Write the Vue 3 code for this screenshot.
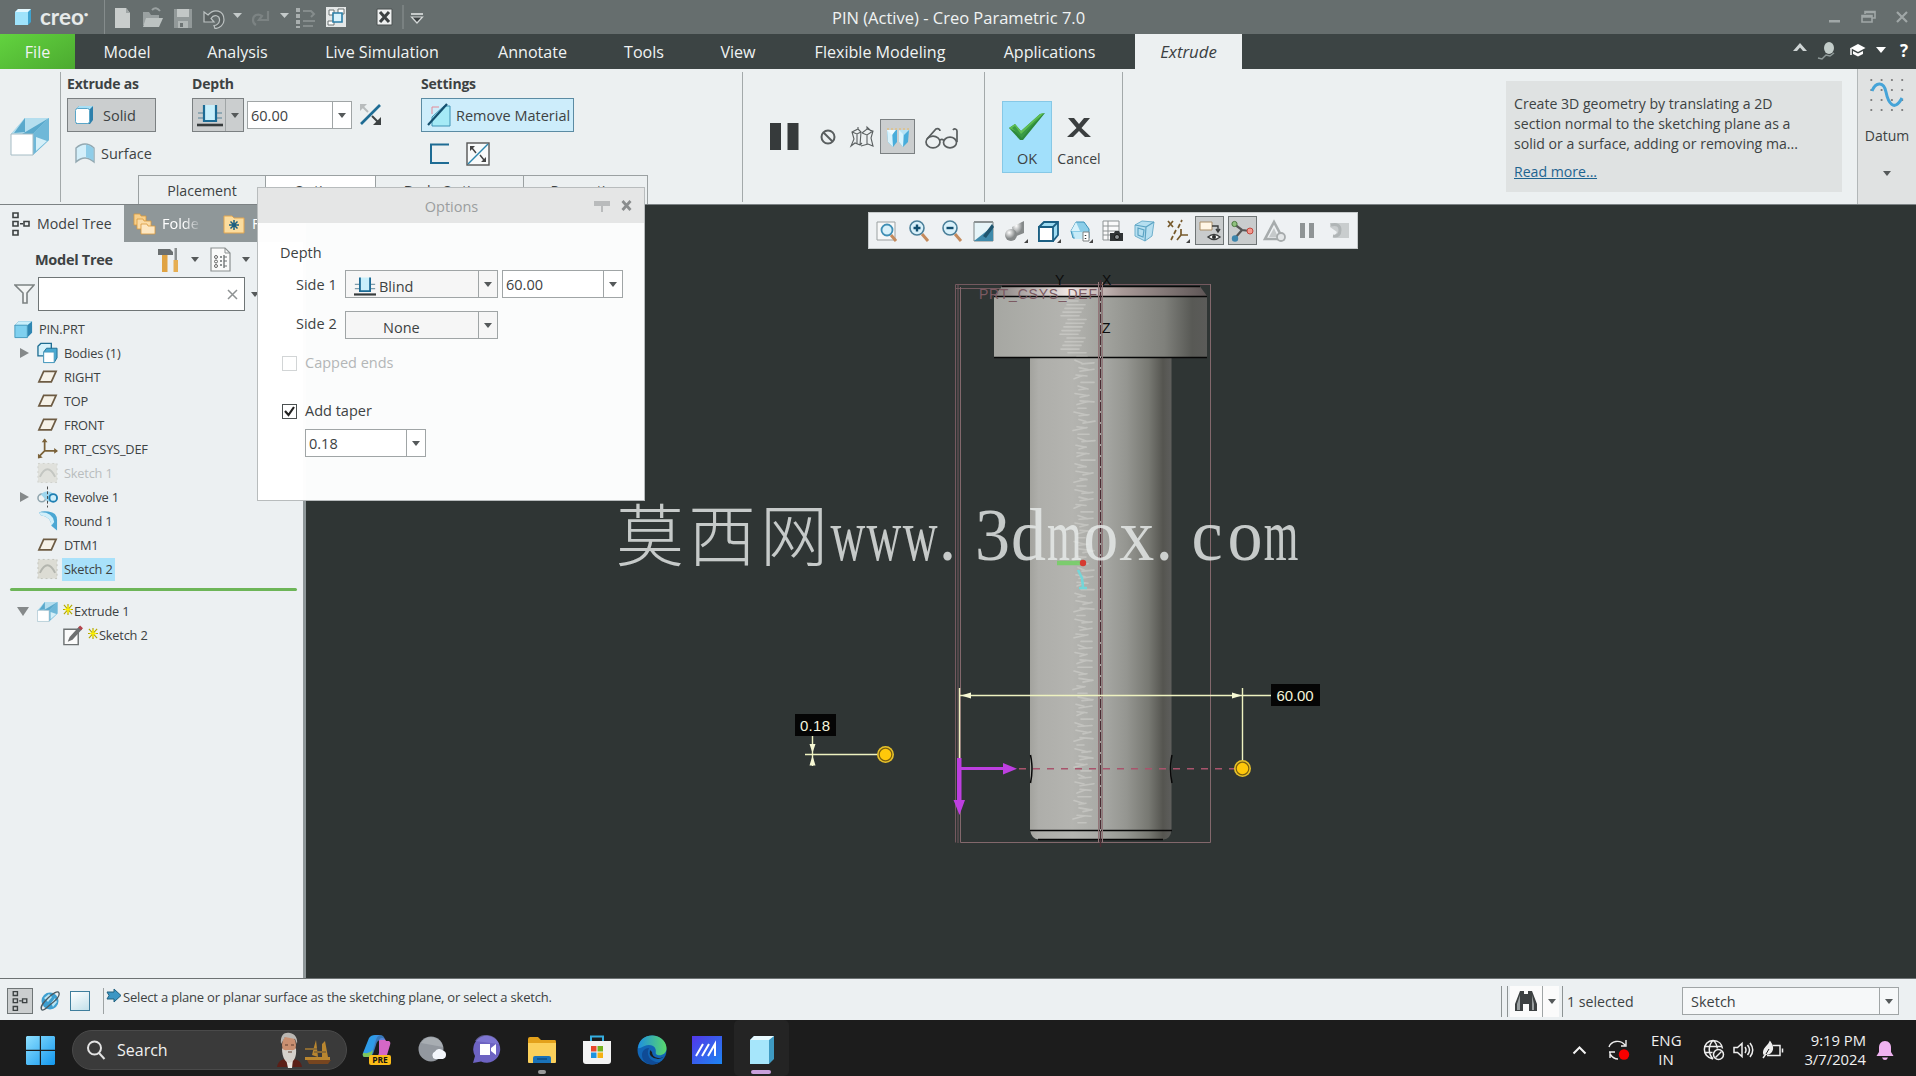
<template>
  <div class="creo">
    <header class="titlebar">
      <div class="brand">
        <svg width="18" height="18" viewBox="0 0 18 18">
          <path d="M1 4l3-3h13v13l-3 3H1z" fill="#3fa3cf"/>
          <path d="M1 4l3-3h13l-3 3z" fill="#e4f8ff"/>
          <path d="M1 4h13v13H1z" fill="#9fe3fb"/>
        </svg>
        <span class="brand-name">creo<sup>•</sup></span>
      </div>
      <div class="quick-access">
        <svg
          v-for="item in quickAccess"
          :key="item.icon"
          class="quick-icon"
          :style="{ width: item.width + 'px' }"
          :viewBox="`0 0 ${item.width} 24`"
          height="24"
          v-html="icons[item.icon]"
        />
      </div>
      <div class="window-title">PIN (Active) - Creo Parametric 7.0</div>
      <div class="window-controls">
        <svg width="12" height="14" viewBox="0 0 12 14"><path d="M0 10h11v2.500H0z" fill="#a0a7a7"/></svg>
        <svg width="15" height="14" viewBox="0 0 15 14" fill="none" stroke="#a0a7a7" stroke-width="1.600">
          <path d="M4 4V1.500h10V8h-3M4 2.500h10M1 5.500h10V12H1zM1 7h10"/>
        </svg>
        <svg width="12" height="14" viewBox="0 0 12 14"><path d="M1 2l10 10M11 2L1 12" stroke="#a0a7a7" stroke-width="2.200"/></svg>
      </div>
    </header>

    <nav class="tabbar">
      <div class="tab file-tab">File</div>
      <div v-for="tab in tabs" :key="tab.label" class="tab" :style="{ width: tab.width + 'px' }">{{ tab.label }}</div>
      <div class="tab active-tab">Extrude</div>
      <div class="tab-tools">
        <svg width="14" height="10" viewBox="0 0 14 10"><path d="M0 9l7-8 7 8h-4L7 5.500 4 9z" fill="#cfd5d5"/></svg>
        <svg width="18" height="19" viewBox="0 0 18 19">
          <ellipse cx="12" cy="7" rx="5" ry="6" fill="#c3cdca"/>
          <path d="M1 17l4 1 4-4 4 1 4-3" fill="none" stroke="#8e9998" stroke-width="1.500"/>
        </svg>
        <svg width="16" height="14" viewBox="0 0 16 14" fill="#fff">
          <path d="M8 1l7.500 4L8 9 .5 5z"/><path d="M3 8l5 2.500L13 8v3l-5 2.500L3 11z"/><path d="M1 5v7" stroke="#fff" stroke-width="1.500"/>
        </svg>
        <svg width="10" height="7" viewBox="0 0 10 7"><path d="M0 0h10L5 6z" fill="#fff"/></svg>
        <b>?</b>
      </div>
    </nav>

    <section class="ribbon">
      <div class="feature-cell">
        <svg width="40" height="40" viewBox="0 0 40 40" v-html="icons.extrude" />
      </div>

      <div class="ribbon-main">
        <div class="groups">
          <div class="group extrude-as">
            <h4>Extrude as</h4>
            <button class="rbtn pressed solid-btn">
              <svg width="22" height="22" viewBox="0 0 22 22">
                <path d="M2 5l3-3h14v14l-3 4H2z" fill="#2d7fab"/><path d="M2 5l3-3h14l-3 3z" fill="#a8dff5"/>
                <rect x="1.500" y="4.500" width="14" height="15" rx="2" fill="#fff" stroke="#5aa6c8"/>
              </svg>
              Solid
            </button>
            <button class="rbtn surface-btn">
              <svg width="22" height="22" viewBox="0 0 22 22">
                <path d="M2 6Q11-2 20 6v14Q11 12 2 20z" fill="#d3effa" stroke="#93a8b1" stroke-width="1.400"/>
                <path d="M12 2.500q4 .5 7.500 4V19q-4-3.500-7.500-3.500z" fill="#8fcde8"/>
              </svg>
              Surface
            </button>
          </div>
          <div class="group depth">
            <h4>Depth</h4>
            <div class="depth-row">
              <div class="depth-mode">
                <svg width="26" height="26" viewBox="0 0 26 26" v-html="icons.blind" />
                <span class="arrow-cell"><i class="caret" /></span>
              </div>
              <div class="combo ribbon-combo"><span>60.00</span><span class="arrow-cell"><i class="caret" /></span></div>
              <svg class="flip" width="24" height="24" viewBox="0 0 24 24">
                <path d="M2 21L21 2" stroke="#1e6c94" stroke-width="2.600"/>
                <path d="M1 1h7L1 8z" fill="#b8bcbd"/><path d="M4 4l5 5" stroke="#b8bcbd" stroke-width="2"/>
                <path d="M22 22h-8l8-8z" fill="#3d4243"/><path d="M13 13l6 6" stroke="#3d4243" stroke-width="2"/>
              </svg>
            </div>
          </div>
          <div class="group settings">
            <h4>Settings</h4>
            <button class="rbtn remove-btn">
              <svg width="25" height="26" viewBox="0 0 25 26">
                <path d="M5 12V5h7" fill="none" stroke="#e58a97"/>
                <path d="M5 20V15L17 4h6v20H5z" fill="#a5eaf6" stroke="#3f93b5"/>
                <path d="M1 23L20 2" stroke="#15506f" stroke-width="2.200"/>
              </svg>
              Remove Material
            </button>
            <div class="setting-icons">
              <svg width="20" height="22" viewBox="0 0 20 22"><path d="M20 1.500H2v18.500h18" fill="none" stroke="#1e6c94" stroke-width="2"/></svg>
              <svg width="24" height="24" viewBox="0 0 24 24">
                <rect x="1" y="1" width="22" height="22" fill="#f8fafa" stroke="#555" stroke-width="1.400"/>
                <path d="M2 22L22 2" stroke="#2c86ae" stroke-width="1.500"/>
                <path d="M4 4h5l-5 5zM20 20h-5l5-5z" fill="#444"/><path d="M6 6l4 5M14 13l4 5" stroke="#444" stroke-width="1.500"/>
              </svg>
            </div>
          </div>
        </div>
        <div class="panel-tabs">
          <span class="ptab placement">Placement</span>
          <span class="ptab options-tab">Options</span>
          <span class="ptab body-tab">Body Options</span>
          <span class="ptab props-tab">Properties</span>
        </div>
      </div>

      <div class="preview-cell">
        <svg class="pause" width="29" height="28" viewBox="0 0 29 28" fill="#363a3b"><path d="M0 0h11v27H0zM17.500 0h11v27h-11z"/></svg>
        <svg width="16" height="16" viewBox="0 0 16 16" fill="none" stroke="#595e5f" stroke-width="2">
          <circle cx="8" cy="8" r="6.500"/><path d="M3.500 3.500l9 9"/>
        </svg>
        <svg class="wire" width="26" height="24" viewBox="0 0 26 24" fill="none" stroke="#5b6061" stroke-width="1.100">
          <path d="M3 7l6-3 3 3-1 13-5-2-4 3 3-7zM13 8l5-4 6 2-2 7 2 8-5-2-7 2M3 7l5 2 4-2M8 9v10M13 8l5 2 6-4M18 10v9M9 4V2M18 4V2l4 4M11 20l2-2"/>
        </svg>
        <div class="feature-toggle">
          <svg width="24" height="24" viewBox="0 0 24 24">
            <path d="M1 5h10v12l-4 5-5-5z" fill="#49addb"/><path d="M1 5h5l1 17-5-5z" fill="#d8f3fd"/><path d="M1 5h9l-4 5z" fill="#eefaff"/>
            <path d="M13 5h10l-1 12-5 5-4-5z" fill="#49addb"/><path d="M13 5h5l-1 17-4-5z" fill="#d8f3fd"/><path d="M13 5h10l-5 5z" fill="#b6e2f4"/>
            <path d="M1 4h10M13 4h10" stroke="#e9b963" stroke-width="1.200" stroke-dasharray="2 2"/>
          </svg>
        </div>
        <svg width="36" height="24" viewBox="0 0 36 24" fill="none" stroke="#595e5f" stroke-width="1.700">
          <ellipse cx="9" cy="17" rx="7" ry="5.800"/><ellipse cx="26" cy="17.500" rx="6.500" ry="5.300"/>
          <path d="M15.500 15.500c1-1.500 3-1.500 4.500 0M3 14L12 4c1.500-1 4 0 4 2M33 17V6c0-2-3-3-4-1"/>
        </svg>
      </div>

      <div class="confirm-cell">
        <div class="ok">
          <svg width="38" height="30" viewBox="0 0 38 30">
            <path d="M1 16l6-4 6 7L32 2l5-1-22 27h-3z" fill="#2d8a3a"/><path d="M1 16l6-4 6 7L32 2l4-1-22 22z" fill="#5fbf52"/>
            <path d="M4 16l3-2 6 8L31 5 14 26z" fill="#3a9a45"/>
          </svg>
          <span>OK</span>
        </div>
        <div class="cancel">
          <svg width="26" height="22" viewBox="0 0 26 22"><path d="M2 1h6l5 6 5-6h6l-8.500 10L25 20h-6l-6-6-6 6H1l9.500-9z" fill="#3b3f40"/></svg>
          <span>Cancel</span>
        </div>
      </div>

      <div class="help-cell">
        <div class="help-box">
          <p>Create 3D geometry by translating a 2D<br>section normal to the sketching plane as a<br>solid or a surface, adding or removing ma...</p>
          <a>Read more...</a>
        </div>
      </div>

      <div class="datum-cell">
        <svg width="36" height="36" viewBox="0 0 36 36">
          <g fill="#777">
            <template v-for="r in 4" :key="r">
              <circle v-for="c in 4" :key="c" :cx="c * 10.300 - 8" :cy="r * 10 - 7" r="1.100" />
            </template>
          </g>
          <path d="M3 14C7 4 15 5 17 15s8 21 16 6" fill="none" stroke="#46a4d8" stroke-width="3"/>
        </svg>
        <span>Datum</span>
        <i class="caret" />
      </div>
    </section>

    <main class="workspace">
      <aside class="sidebar">
        <div class="side-tabs">
          <div class="side-tab current">
            <svg width="20" height="26" viewBox="0 0 20 26" fill="none" stroke="#3c4142" stroke-width="1.600" v-html="icons.tree" />
            <span>Model Tree</span>
          </div>
          <div class="side-tab folder-tab">
            <svg width="24" height="24" viewBox="0 0 24 24" stroke="#d8993e" stroke-width=".8">
              <path d="M1 2h6l1 2h5v9H1z" fill="#f7cf8b"/><path d="M4 7h6l1 2h7v8H4z" fill="#fadba6"/><path d="M8 12h6l1 2h7v8H8z" fill="#fde7c2"/>
            </svg>
            <span class="fade-text">Folde</span>
          </div>
          <div class="side-tab fav-tab">
            <svg width="22" height="20" viewBox="0 0 22 20">
              <path d="M1 2h8l2 2h10v15H1z" fill="#fbdc9e" stroke="#e0a550"/>
              <path d="M11 6v10M6 11h10M7.500 7.500l7 7M14.500 7.500l-7 7" stroke="#1d5f80" stroke-width="1.500"/>
            </svg>
            <span>F</span>
          </div>
        </div>

        <div class="tree-head">
          <strong>Model Tree</strong>
          <svg width="24" height="26" viewBox="0 0 24 26">
            <path d="M1 2h12l3 3v3H1z" fill="#6a6f70"/><path d="M5 8h5.500v17H5z" fill="#e0a342"/>
            <path d="M17.500 1h2.500v12h-2.500z" fill="#8a8f90"/><path d="M16.500 13h4.500v12h-4.500z" fill="#e6ae52"/>
          </svg>
          <i class="caret" />
          <svg class="list-icon" width="21" height="25" viewBox="0 0 21 25">
            <path d="M1 1h14l5 5v18H1z" fill="#fafafa" stroke="#8a8f90" stroke-width="1.200"/><path d="M15 1v5h5" fill="none" stroke="#8a8f90"/>
            <path d="M10 10h2M10 14h2M10 18h2M14 8v13" stroke="#6a6f70" stroke-width="1.300"/>
            <g fill="none" stroke="#666"><circle cx="6" cy="10" r="1.500"/><circle cx="6" cy="14.500" r="1.500"/><circle cx="6" cy="19" r="1.500"/></g>
            <path d="M14 10h3M14 14h3M14 19h3" stroke="#6a6f70"/>
          </svg>
          <i class="caret" />
        </div>

        <div class="filter-row">
          <svg width="21" height="20" viewBox="0 0 21 20"><path d="M1 1h19l-7 8v10H9V9z" fill="#f3f5f5" stroke="#7c8283" stroke-width="1.600"/></svg>
          <div class="filter-input">
            <svg width="11" height="11" viewBox="0 0 11 11"><path d="M1 1l9 9M10 1l-9 9" stroke="#8e9293" stroke-width="1.500"/></svg>
          </div>
          <i class="caret" />
        </div>

        <div class="tree">
          <div v-for="(node, i) in nodes" :key="i" class="node" :class="['level-' + node.level, { dim: node.dim }]">
            <span class="twisty"><i v-if="node.arrow" :class="'tri-' + node.arrow" /></span>
            <svg class="node-icon" width="22" height="22" viewBox="0 0 22 22" v-html="icons[node.icon]" />
            <span class="node-label" :class="{ selected: node.selected }">{{ node.label }}</span>
          </div>
          <div class="insert-line" />
          <div v-for="(node, i) in pendingNodes" :key="'p' + i" class="node" :class="'level-' + node.level">
            <span class="twisty"><i v-if="node.arrow" :class="'tri-' + node.arrow" /></span>
            <svg class="node-icon" width="22" height="22" :viewBox="node.icon === 'extrude' ? '0 0 40 40' : '0 0 22 22'" v-html="icons[node.icon]" />
            <svg class="spark" width="10" height="11" viewBox="0 0 11 12">
              <path d="M5.500 0v12M0 6h11M1 1l9 10M10 1L1 11" stroke="#b4a800" stroke-width="1.300"/><path d="M5.500 2v8M2 6h7" stroke="#fff200" stroke-width="1.500"/>
            </svg>
            <span class="node-label">{{ node.label }}</span>
          </div>
        </div>
      </aside>

      <div class="viewport">
        <!-- model, datums and dimensions share window coordinates -->
        <svg class="scene" viewBox="306 205 1610 773" width="1610" height="773">
          <defs>
            <linearGradient id="shaft" x1="0" x2="1">
              <stop offset="0" stop-color="#a3a39e"/><stop offset=".06" stop-color="#aeaeaa"/><stop offset=".3" stop-color="#b4b4b0"/>
              <stop offset=".5" stop-color="#a9aaa6"/><stop offset=".68" stop-color="#959691"/><stop offset=".84" stop-color="#777872"/>
              <stop offset=".94" stop-color="#555550"/><stop offset="1" stop-color="#5e5e5c"/>
            </linearGradient>
            <linearGradient id="head" x1="0" x2="1">
              <stop offset="0" stop-color="#a6a7a2"/><stop offset=".35" stop-color="#b4b4b0"/><stop offset=".55" stop-color="#9e9f9a"/>
              <stop offset=".8" stop-color="#7f807b"/><stop offset=".93" stop-color="#585955"/><stop offset="1" stop-color="#5b5b59"/>
            </linearGradient>
            <linearGradient id="crown" x1="0" x2="1">
              <stop offset="0" stop-color="#86807e"/><stop offset=".35" stop-color="#efe6e4"/><stop offset=".6" stop-color="#a99a98"/><stop offset="1" stop-color="#5e5656"/>
            </linearGradient>
          </defs>

          <rect x="1030" y="357" width="141.500" height="473" fill="url(#shaft)"/>
          <path d="M1030 830h141.500q-1 9-8 9.500h-125q-7-.5-8.500-9.500z" fill="url(#shaft)"/>
          <rect x="994" y="296" width="213" height="61.500" fill="url(#head)"/>
          <path d="M994 296l8-9.500h198l7 9.500z" fill="url(#crown)"/>
          <g fill="none" stroke="#dededa" stroke-width="1.600" stroke-linecap="round" opacity=".42">
            <path v-for="(s, i) in streaks" :key="i" :d="s" />
          </g>
          <g stroke="#080808" stroke-width="1.300" fill="none">
            <path d="M1002 286.500h198M994 296.500h213M994 357.500h213M1030 830.500h142M1038 839.500h125"/>
            <path d="M1030.500 755q3 14 0 28M1172 755q-3 14 0 28" stroke-width="1.500"/>
          </g>

          <g stroke="#74595f" fill="none">
            <path d="M955.500 284.500V842.500M958 284V843M955.500 284.500H1211M955 288.500H1000"/>
            <path d="M960.500 287V842.500H1210.500V284" stroke="#83686c"/>
            <path d="M1098.500 282V842M1102.500 282V842" stroke="#93777a"/>
            <path d="M1100.500 280V847" stroke="#4a2c33" stroke-width="1.600"/>
            <path d="M1100.500 290V840" stroke="#a9a3a0" stroke-dasharray="2 9"/>
          </g>
          <g class="cad-text" fill="#0c0c0c">
            <text x="1055" y="285">Y</text><text x="1102" y="285">X</text><text x="1102" y="333">Z</text>
            <text x="979" y="299" class="csys" textLength="118">PRT_CSYS_DEF</text>
          </g>

          <!-- watermark -->
          <g class="mark">
            <text v-for="(ch, i) in '莫西网'" :key="ch" :x="616 + i * 72" y="561" class="cjk">{{ ch }}</text>
            <text v-for="(m, i) in mark" :key="'m' + i" :transform="`translate(${m.x} 560) scale(${m.sx} 1)`">{{ m.ch }}</text>
          </g>

          <!-- spin center -->
          <path d="M1057 563h24" stroke="#6fd35f" stroke-width="4.500" opacity=".8"/>
          <circle cx="1083" cy="563" r="3.200" fill="#d63a31"/>
          <path d="M1078 570l4 8 1 9M1079 588h8" stroke="#74d6d8" stroke-width="2.600" fill="none"/>

          <g stroke="#eef2c0" stroke-width="1.400" fill="none">
            <path d="M960 695.500H1271M959.500 688V760" />
            <path d="M1242.500 688V762M812.500 736V766M805 754.500H878"/>
          </g>
          <g fill="#f6f8d4">
            <path d="M961 695.500l10-3v6zM1242 695.500l-10-3v6zM812.500 753l-3-9h6zM812.500 755.500l-3 10h6z"/>
          </g>
          <path d="M1019 768.800H1235" stroke="#a8546c" stroke-width="1.500" stroke-dasharray="7 7"/>
          <g fill="#bd3fe0">
            <path d="M957 758h4.500v42h3.500l-5.500 15-6-15h3.500zM960 767h43v-4l14 5.800-14 5.700v-4.500h-43z"/>
          </g>
          <g v-for="h in handles" :key="h.x">
            <circle :cx="h.x" :cy="h.y" r="8.500" fill="#e8c22a"/>
            <circle :cx="h.x" :cy="h.y" r="6.300" fill="#ffc80a" stroke="#7a5f10" stroke-width="1.200"/>
          </g>
          <path d="M1271 684h49v22h-49zM795 714h41v22h-41z" fill="#050505"/>
          <g class="dim-text">
            <text x="1276.500" y="700.500" textLength="37">60.00</text>
            <text x="800" y="730.500" textLength="30">0.18</text>
          </g>
        </svg>

        <div class="view-toolbar">
          <div v-for="(name, i) in viewTools" :key="name" class="view-tool" :class="{ on: i === 10 || i === 11 }">
            <svg width="24" height="24" viewBox="0 0 24 24" v-html="icons[name]" />
          </div>
        </div>
      </div>
    </main>

    <div class="options-dialog">
      <div class="dialog-head">
        <span>Options</span>
        <svg class="pin" width="16" height="12" viewBox="0 0 16 12"><path d="M0 1h16v5H0z" fill="#b9bbbc"/><path d="M8 6v6" stroke="#b9bbbc" stroke-width="2"/></svg>
        <svg width="11" height="11" viewBox="0 0 11 11"><path d="M1.500 1l8 9M9.500 1l-8 9" stroke="#8a8d8e" stroke-width="2.800"/></svg>
      </div>
      <div class="dialog-body">
        <div class="line depth-line">Depth</div>
        <div class="line side-1">
          <label>Side 1</label>
          <div class="combo wide"><span class="opt"><svg width="22" height="22" viewBox="0 0 26 26" v-html="icons.blind" />Blind</span><span class="arrow-cell"><i class="caret" /></span></div>
          <div class="combo value"><span>60.00</span><span class="arrow-cell"><i class="caret" /></span></div>
        </div>
        <div class="line side-2">
          <label>Side 2</label>
          <div class="combo wide"><span class="opt none">None</span><span class="arrow-cell"><i class="caret" /></span></div>
        </div>
        <div class="line check-line disabled"><span class="box" />Capped ends</div>
        <div class="line check-line taper">
          <span class="box"><svg width="13" height="13" viewBox="0 0 13 13"><path d="M2 6l3.500 4L11 2" fill="none" stroke="#222" stroke-width="2.200"/></svg></span>Add taper
        </div>
        <div class="combo value taper-value"><span>0.18</span><span class="arrow-cell"><i class="caret" /></span></div>
      </div>
    </div>

    <footer class="statusbar">
      <div class="status-toggle">
        <svg width="20" height="22" viewBox="0 0 20 26" fill="none" stroke="#3c4142" stroke-width="1.600" v-html="icons.tree" />
      </div>
      <svg class="globe" width="22" height="22" viewBox="0 0 22 22">
        <circle cx="11" cy="11" r="8.500" fill="#3e9fd0"/><path d="M5 8l5-4 3 3-4 5zM12 13l4-5 2 4-4 5z" fill="#b8e4f4"/>
        <path d="M3 20C0 17 5 12 9 8S19 0 20 3s-4 8-8 11-7 7-9 6z" fill="none" stroke="#4b5a61" stroke-width="1.300"/>
      </svg>
      <div class="window-swatch" />
      <div class="message">
        <svg width="16" height="15" viewBox="0 0 16 15"><path d="M1 4h7V1l7 6.500L8 14v-3H1l2-3.500z" fill="#3c96c4" stroke="#1f607f"/></svg>
        <span>Select a plane or planar surface as the sketching plane, or select a sketch.</span>
      </div>
      <div class="find-box">
        <svg width="24" height="22" viewBox="0 0 24 22">
          <path d="M6 1h4v3h4V1h4l5 13v7h-8v-7H9v7H1v-7z" fill="#3d4142"/><path d="M6 5L3 14v6h3V8zM18 5l2 9v6h-2z" fill="#9a9fa0"/>
        </svg>
        <span class="arrow-cell"><i class="caret" /></span>
      </div>
      <div class="selected-count">1 selected</div>
      <div class="combo filter-combo"><span>Sketch</span><span class="arrow-cell"><i class="caret" /></span></div>
    </footer>

    <div class="taskbar">
      <svg class="start" width="29" height="29" viewBox="0 0 29 29">
        <defs><linearGradient id="win" x2="1" y2="1"><stop stop-color="#8fe0ff"/><stop offset="1" stop-color="#1297ee"/></linearGradient></defs>
        <path d="M1 0h12.800v13.800H0V1zM15 0h13l1 1v12.800H15zM0 15h13.800v14H1l-1-1zM15 15h14v13l-1 1H15z" fill="url(#win)"/>
      </svg>
      <div class="search">
        <svg width="20" height="20" viewBox="0 0 20 20" fill="none" stroke="#e3e3e3" stroke-width="2"><circle cx="8.500" cy="8" r="6.500"/><path d="M13 13l5.500 6"/></svg>
        <span>Search</span>
        <svg class="portrait" width="56" height="38" viewBox="0 0 56 38">
          <path d="M0 36c1-6 5-8 9-8h6c5 0 9 2 10 8z" fill="#5b1f17"/><path d="M9 28h7l-1 9h-4z" fill="#e8e4e0"/>
          <ellipse cx="12" cy="14" rx="7" ry="10" fill="#c98f70"/><path d="M4 13C3 3 8 1 13 2s8 5 7 11l-2-5-10-2z" fill="#b9b6b2"/>
          <path d="M5 17c0 11 4 14 7 15 4-1 8-4 7-15-2 3-4 2-7 2s-5 1-7-2z" fill="#d5d1cb"/><path d="M8 14h3M14 14h3M11 21h4" stroke="#5e3f30" stroke-width="1.200"/>
          <path d="M28 26h25v3H28zM35 24l2-8 2-7 2 17zM45 26V13l3-3 3 16z" fill="#b9862f"/><path d="M30 29h24l-3 4H32z" fill="#77451f"/><path d="M28 18h12M37 21h12" stroke="#8a6a34" stroke-width="2"/>
        </svg>
      </div>
      <div class="apps">
        <div v-for="app in apps" :key="app" class="app" :class="app">
          <svg width="30" height="30" viewBox="0 0 30 30" v-html="icons[app]" />
        </div>
      </div>
      <div class="tray">
        <svg width="15" height="10" viewBox="0 0 15 10"><path d="M1.500 8.500l6-6 6 6" fill="none" stroke="#f2f2f2" stroke-width="2"/></svg>
        <svg class="sync" width="24" height="24" viewBox="0 0 24 24">
          <path d="M2 9C4 3 13 1 18 7M19 2v6h-5M2 14h6M3 14v6M3 16c2 3 5 5 8 5" fill="none" stroke="#eee" stroke-width="1.400"/>
          <circle cx="17" cy="16.500" r="5.200" fill="#f70000"/>
        </svg>
        <div class="lang">ENG<br>IN</div>
        <svg class="net" width="22" height="22" viewBox="0 0 22 22" fill="none" stroke="#eee" stroke-width="1.500">
          <path d="M10 20C-2 18-1 2 10 1.500c6 0 9 4 9.500 8M10 1.500c-5 5-5 13 0 18.500M10 1.500c3 2 4 5 4.300 8M1.500 7.500h17M1.500 13.500h8"/>
          <circle cx="15.500" cy="15.500" r="5"/><path d="M12.500 18.500l6-6"/>
        </svg>
        <svg class="vol" width="21" height="18" viewBox="0 0 21 18" fill="none" stroke="#eee" stroke-width="1.500">
          <path d="M1 6.500h3.500L9 2.500v13l-4.500-4H1zM12 6q2 3 0 6M14.500 4q4 5 0 10M17 2q5.500 7 0 14"/>
        </svg>
        <svg class="bat" width="22" height="20" viewBox="0 0 22 20" fill="none" stroke="#eee" stroke-width="1.500">
          <path d="M11 5.500h7v10H5M20.500 8.500v4"/><path d="M2 14C0 8 6 7 8 2c4 5 3 12-4 12z" fill="#eee"/><path d="M1 18l5-7" stroke="#eee"/><path d="M4 14l3-5" stroke="#1c1c1c" stroke-width="1"/>
        </svg>
        <div class="clock">9:19 PM<br>3/7/2024</div>
        <svg class="bell" width="18" height="21" viewBox="0 0 18 21"><path d="M9 1c4 0 6 3 6 6.500V12l2.500 4H.5L3 12V7.500C3 4 5 1 9 1zM6 17.500h6q-1 2.500-3 2.500t-3-2.500z" fill="#efb2f0"/></svg>
      </div>
    </div>
  </div>
</template>

<script setup>
const tabs = [
  { label: 'Model', width: 104 },
  { label: 'Analysis', width: 117 },
  { label: 'Live Simulation', width: 172 },
  { label: 'Annotate', width: 129 },
  { label: 'Tools', width: 94 },
  { label: 'View', width: 94 },
  { label: 'Flexible Modeling', width: 190 },
  { label: 'Applications', width: 149 }
]

const quickAccess = [
  { icon: 'newDoc', width: 29 },
  { icon: 'open', width: 31 },
  { icon: 'save', width: 29 },
  { icon: 'undo', width: 46 },
  { icon: 'redo', width: 47 },
  { icon: 'regen', width: 30 },
  { icon: 'windows', width: 51 },
  { icon: 'closeWin', width: 26 },
  { icon: 'more', width: 24 }
]

const viewTools = [
  'zoomFit', 'zoomIn', 'zoomOut', 'repaint', 'shading', 'cube', 'savedViews', 'camera',
  'perspective', 'datums', 'annot', 'spin', 'simulate', 'pauseSim', 'stopSim'
]

const apps = ['copilot', 'weather', 'chat', 'explorer', 'store', 'edge', 'myasus', 'creoApp']

const nodes = [
  { label: 'PIN.PRT', icon: 'part', level: 0 },
  { label: 'Bodies (1)', icon: 'bodies', level: 1, arrow: 'right' },
  { label: 'RIGHT', icon: 'plane', level: 1 },
  { label: 'TOP', icon: 'plane', level: 1 },
  { label: 'FRONT', icon: 'plane', level: 1 },
  { label: 'PRT_CSYS_DEF', icon: 'csys', level: 1 },
  { label: 'Sketch 1', icon: 'sketch', level: 1, dim: true },
  { label: 'Revolve 1', icon: 'revolve', level: 1, arrow: 'right' },
  { label: 'Round 1', icon: 'round', level: 1 },
  { label: 'DTM1', icon: 'plane', level: 1 },
  { label: 'Sketch 2', icon: 'sketch', level: 1, selected: true }
]

const pendingNodes = [
  { label: 'Extrude 1', icon: 'extrude', level: 1, arrow: 'down' },
  { label: 'Sketch 2', icon: 'pencil', level: 2 }
]

const handles = [
  { x: 885.5, y: 754.5 },
  { x: 1242.5, y: 768.5 }
]

// half-width cells, wide letters are squeezed to fit
const squeeze = { w: 0.66, m: 0.61 }
const mark = [...'www.3dmox.com'].map((ch, i) => ({
  ch,
  x: 830.5 + i * 36.1,
  sx: squeeze[ch] || 0.96
}))

// specular ripple on the cylinder
const streaks = []
for (let i = 0, y = 301; y < 824; i++, y += 3.7) {
  const onHead = y < 354
  const x = onHead ? 1060 + ((i * 7) % 9) : 1073 + ((i * 11) % 7) + ((i * i) % 5)
  const w = onHead ? 18 : 7 + ((i * 5) % 8)
  const tilt = onHead ? 0 : ((i * 3) % 7) - 3
  streaks.push(`M${x} ${y}l${w} ${tilt}`)
}

const lens = '<path d="M15 15l6 7" stroke="#c48a5c" stroke-width="3"/><circle cx="10" cy="9" r="7" fill="#d9f1fa" stroke="#4a7f99" stroke-width="1.600"/>'

const icons = {
  newDoc: '<path d="M2 3h11l4 5v15H2z" fill="#c9cdcc"/><path d="M13 3v5h4" fill="#9ea4a4"/>',
  open: '<path d="M1 7h6l2 3h8v10H1z" fill="#9aa1a1"/><path d="M4 13h17l-4 9H1z" fill="#bcc2c1"/><path d="M10 5q4-4 8 1" stroke="#9aa1a1" stroke-width="2" fill="none"/>',
  save: '<path d="M1 4h18v19H1z" fill="#929999"/><path d="M4 4h12v8H4z" fill="#c2c7c6"/><path d="M5 16h10v7H5z" fill="#b1b7b6"/><path d="M7 18h3v4H7z" fill="#6d7474"/>',
  undo: '<path d="M2 7v10h10l-3-3.500c3-5 9-3 8.500 2-.3 3-3 5-5.500 5l1 3c5 0 9-4 9-8.500C22 5 12 3 6 10z" fill="#5a6161" stroke="#bcc2c2" stroke-width="1.200"/><path d="M31 8h9l-4.500 5z" fill="#c4caca"/>',
  redo: '<path d="M20 6v9h-9l3-4c-4-3-9-1-9 4 0 2 1 4 3 5" fill="none" stroke="#7c8383" stroke-width="2.200"/><path d="M32 8h9l-4.500 5z" fill="#c4caca"/>',
  regen: '<path d="M1 3h4v4H1zM1 9h4v4H1zM1 15h4v4H1zM1 21h4v2H1z" fill="#a9afaf"/><path d="M8 6h8l3 3-3 3M8 16h12M8 21h10" stroke="#858c8c" stroke-width="2" fill="none"/>',
  windows: '<path d="M1 2h20v20H1z" fill="#e4e7e7"/><path d="M4 5h5v5H4zM13 4h6v5h-6zM3 16h6v4H3z" fill="#fff" stroke="#6b7272"/><path d="M8 8h9v9H8z" fill="#d9f2fc" stroke="#2b7ea6" stroke-width="1.600"/>',
  closeWin: '<path d="M1 4h15v16H1z" fill="#eef0f0" stroke="#4b5151"/><path d="M4 7l9 10M13 7L4 17" stroke="#3c4142" stroke-width="3"/>',
  more: '<path d="M1 0v24" stroke="#858c8c" stroke-width="1.300"/><path d="M9 9h12" stroke="#e0e3e3" stroke-width="1.600"/><path d="M9.500 12h11l-5.500 6z" fill="#3c4142" stroke="#d5d9d9" stroke-width="1.200"/>',
  extrude: '<path d="M1 17L15 1h24v22L23 38H1z" fill="#8cc9e2"/><path d="M15 1h24L23 17H1z" fill="#b5deee"/><path d="M15 1v14L4 16zM39 1L23 17H12z" fill="#5aa9cc"/><path d="M23 17L39 1v22L23 38z" fill="#6fb8d8"/><path d="M26 34V20L37 24z" fill="#d5eff8"/><path d="M1 17h22v21H1z" fill="#fff" stroke="#a5bcc5"/>',
  blind: '<path d="M1 11h24M1 16h24" stroke="#7d9cab" stroke-width="1.500"/><path d="M7 3v16h12V3" fill="#c9effb" stroke="#1c6b95" stroke-width="2.200"/><path d="M0 23h26" stroke="#363b3c" stroke-width="2.600"/>',
  tree: '<path d="M2 2h5v4.500H2zM2 10.500h5V15H2zM2 19.500h5V24H2zM13 10.500h5V15h-5zM9 12.800h3"/>',
  part: '<path d="M2 7l4-4h14v12l-5 5H2z" fill="#2f86b2"/><path d="M2 7l4-4h14l-5 4z" fill="#c9effb"/><path d="M2 7h13v13H2z" fill="#7fd0ef" stroke="#4b9dc0"/>',
  bodies: '<path d="M1 4l3-3h11v11l-2 2H1z" fill="#d7f2fb" stroke="#1f6d92" stroke-width="1.400"/><path d="M7 10l3-4h11v10l-3 5H7z" fill="#49a9d2" stroke="#1f6d92"/><path d="M7 10h11v11H7z" fill="#fff" stroke="#4a9cc0"/>',
  plane: '<path d="M7 5h13l-5 11H2z" fill="#f6f2e8" stroke="#6d5b43" stroke-width="1.800"/>',
  csys: '<path d="M8 1v12L2 19M8 13h13" stroke="#7a6138" stroke-width="1.800" fill="none"/><path d="M5 4l3-4 3 4zM18 10l4 3-4 3zM1 16v5l5-1z" fill="#7a6138"/>',
  sketch: '<path d="M1 1h20v20H1z" fill="#dcdcd4"/><path d="M3 15q8-16 16 0" fill="none" stroke="#b3b5ae" stroke-width="2"/><path d="M1 21V1h20v20z" fill="none" stroke="#c2c3bc" stroke-dasharray="2 3"/>',
  revolve: '<circle cx="5" cy="12" r="4" fill="#f0f3f4" stroke="#8fa4ad" stroke-width="1.600"/><path d="M4 8q7-6 14 0l-1 8h-6z" fill="#9ed6ee"/><circle cx="17" cy="12" r="4" fill="#cdeefa" stroke="#1f7fb2" stroke-width="2"/><path d="M11 0v22" stroke="#444" stroke-dasharray="3 2"/>',
  round: '<path d="M2 2Q6 0 12 1q9 1 9 9v11l-6-5Q15 7 4 5z" fill="#4ba7d3"/><path d="M2 2q14-1 16 10l-3 4Q15 7 4 5z" fill="#d2effa"/>',
  pencil: '<path d="M2 4h15v16H2z" fill="#fbfbfb" stroke="#6d7273" stroke-width="1.500"/><path d="M6 17l2-5L18 1l3 3L11 15z" fill="#6d6f70"/><path d="M17 2l2-2 3 3-2 2z" fill="#b4434b"/>',
  zoomFit: '<path d="M2 3h18v18H2z" fill="#f7f8f8" stroke="#9ba0a1"/><path d="M16 16l5 6" stroke="#c48a5c" stroke-width="3"/><circle cx="12" cy="11" r="5.500" fill="#d9f1fa" stroke="#3f8fb5" stroke-width="1.800"/>',
  zoomIn: lens + '<path d="M10 5.500v7M6.500 9h7" stroke="#124f70" stroke-width="2.400"/>',
  zoomOut: lens + '<path d="M6.500 9h7" stroke="#124f70" stroke-width="2.400"/>',
  repaint: '<path d="M2 3h19v19H2z" fill="#e6f4f8" stroke="#7d8586"/><path d="M2 22L21 7v15z" fill="#3f8aab"/><path d="M11 17L20 5l2 3-8 11z" fill="#1f556f"/><path d="M2 3h19" stroke="#8b9293" stroke-width="2"/>',
  shading: '<defs><radialGradient id="ball" cx=".35" cy=".3"><stop stop-color="#fff"/><stop offset="1" stop-color="#85898a"/></radialGradient></defs><path d="M8 8L20 2v12L10 18z" fill="url(#ball)"/><circle cx="7" cy="16" r="6" fill="url(#ball)"/><path d="M24 20v4h-4z" fill="#444"/>',
  cube: '<path d="M2 8l5-5h14v13l-5 6H2z" fill="#9fdcf2" stroke="#1b5f83" stroke-width="1.800"/><path d="M2 8h14v14H2z" fill="#fff" stroke="#1b5f83" stroke-width="1.800"/><path d="M16 8l5-5" stroke="#1b5f83" stroke-width="1.800"/><path d="M24 20v4h-4z" fill="#444"/>',
  savedViews: '<path d="M2 12l5-9h8l5 7v9H4z" fill="#8bcde8" stroke="#3b91b8"/><path d="M7 3l4 9H2z" fill="#d8f2fb"/><path d="M4 13h10v7H6z" fill="#c7ebf8"/><path d="M14 13h6v9h-6z" fill="#fff" stroke="#7c8283"/><path d="M16.500 16v1M16.500 19v1" stroke="#333" stroke-width="1.500"/><path d="M24 20v4h-4z" fill="#444"/>',
  camera: '<path d="M2 2h16v19H2zM2 7h16M2 12h16M2 16h16M7 2v19" fill="#fafafa" stroke="#8d9293"/><path d="M9 14h4l1-2h4l1 2h3v8H9z" fill="#303435"/><circle cx="16" cy="18" r="2.500" fill="#8b9091" stroke="#111"/>',
  perspective: '<path d="M2 6l7-4 12 1-2 14-7 5L2 17z" fill="#b6dff0" stroke="#6fb0cc"/><path d="M2 6l11 2-1 14M13 8l8-5M5 9l6 2-1 7-5-2z" fill="none" stroke="#5ba3c3" stroke-width="1.200"/>',
  datums: '<g stroke="#76592b" stroke-width="1.700" fill="none"><path d="M2 2l5 6M7 2L2 8M12 9l2-4M15 3l1-2M5 21l2-4M8 15l2-4M15 10v6l-4 5M15 16h7"/></g><path d="M24 20v4h-4z" fill="#444"/>',
  annot: '<path d="M2 3h12v8H2z" fill="#fff6e6" stroke="#a98e69"/><path d="M14 7h6v5M18 10l2 3 2-3" stroke="#3a3d3e" stroke-width="1.400" fill="none"/><path d="M10 18q6-5 12 0-6 5-12 0z" fill="#fff" stroke="#3a3d3e" stroke-width="1.500"/><circle cx="16" cy="18" r="2" fill="#2a2d2e"/>',
  spin: '<path d="M4 5l8 6 8 1M12 11l-7 8" stroke="#555" stroke-width="2.200" fill="none"/><circle cx="4.500" cy="5" r="2.600" fill="#8fc17f" stroke="#4b7a3f"/><circle cx="20" cy="12" r="3" fill="#f29a90" stroke="#c2483e"/><circle cx="5" cy="19.500" r="3.200" fill="#3d86ad"/>',
  simulate: '<path d="M11 3L2 20h18z" fill="none" stroke="#a6abac" stroke-width="2.600"/><path d="M11 9l-5 9h9z" fill="#c5c9ca"/><circle cx="18" cy="18" r="4" fill="#e4e7e8" stroke="#a6abac" stroke-width="1.800"/>',
  pauseSim: '<path d="M5 4h5v15H5zM14 4h5v15h-5z" fill="#8f9495"/>',
  stopSim: '<path d="M3 4h19v15H6l4-6-7-5z" fill="#c9cdce"/><path d="M4 6q9-2 9 5t-7 6" stroke="#b0b5b6" stroke-width="3" fill="none"/>',
  copilot: '<path d="M7 3q2-3 6-3h5q-3 1-4 5l-4 14q-1 3-4 3H3q-3 0-2-4z" fill="#2e9be8"/><path d="M17 5q1-2 3-2 3 0 4 3l3 0q2 1 1 4l-3 10q-2 3-5 3h-7q3-1 4-5z" fill="#d467c6"/><path d="M13 0h5q4 0 5 5h-4q-4 0-5 5l-3 9q-2 3-5 3 3-1 4-6l3-11q1-4 0-5z" fill="#3f8fe0" opacity=".8"/><path d="M3 18q4 1 8-3l-1 4q-1 3-4 3H3q-3 0-2-4z" fill="#7fc65a"/><rect x="7" y="20" width="22" height="10" rx="2" fill="#fbbc18"/><text x="18" y="28.200" text-anchor="middle" font-family="Open Sans" font-size="8.500" font-weight="700" fill="#111">PRE</text>',
  weather: '<circle cx="14" cy="14" r="12.500" fill="#93989f"/><path d="M4 8a12 12 0 0 1 22 4" fill="#b5bac0" opacity=".6"/><path d="M18 24a4 4 0 0 1 0-7.500 5 5 0 0 1 8-1 4.500 4.500 0 0 1 0 8.500z" fill="#f3f6fb"/>',
  chat: '<path d="M1 28l2-7a13.500 13.500 0 1 1 6 5.500z" fill="#6d63c2"/><path d="M3 6a13.500 13.500 0 0 1 24 3z" fill="#8b84dc" opacity=".6"/><path d="M8 9h10v11H8zM19 13l5-4v11l-5-4z" fill="#fff"/>',
  explorer: '<path d="M1 4q0-2 2-2h8l3 3h14q1 0 1 2v7H1z" fill="#e3a11b"/><path d="M1 8h28v19q0 1-1 1H2q-1 0-1-1z" fill="#fbd05b"/><path d="M6 28v-5q0-2 2-2h14q2 0 2 2v5z" fill="#1a72b8"/><path d="M10 24h10" stroke="#0e4e85" stroke-width="1.500"/>',
  store: '<path d="M9 7V1.500h12V7" fill="none" stroke="#35aee0" stroke-width="2"/><path d="M1 6h28v20q0 3-3 3H4q-3 0-3-3z" fill="#f3f3f3"/><path d="M9 11h5.500v5.500H9z" fill="#e8482c"/><path d="M15.500 11H21v5.500h-5.500z" fill="#75b320"/><path d="M9 17.500h5.500V23H9z" fill="#1d93e0"/><path d="M15.500 17.500H21V23h-5.500z" fill="#f5b112"/>',
  edge: '<defs><linearGradient id="eg" x2="1"><stop stop-color="#1e8fe0"/><stop offset="1" stop-color="#59d96b"/></linearGradient></defs><circle cx="15" cy="15" r="14.500" fill="#1265b5"/><path d="M1 13C2 4 9 0 16 .5 25 1 30 8 29.500 14c-.5 5-5 7-9 6-3-1-1-3-2-6-1-4-7-5-11-3-3 1-5 3-6.500 2z" fill="url(#eg)"/><path d="M11 16c-1 6 4 12 12 11-7 5-18 2-18-7 0-4 3-7 7-7z" fill="#0f4b96"/><path d="M13 15q-2 8 8 9 4 0 7-3-2 2-7 2-6-1-6-6z" fill="#1c1c1c"/>',
  myasus: '<defs><linearGradient id="ma" y2="1"><stop stop-color="#5237e8"/><stop offset="1" stop-color="#1d86f2"/></linearGradient></defs><path d="M0 1h30v28H0z" fill="url(#ma)"/><path d="M4 21l7-12M10 21l7-12M16 21l7-12v12" stroke="#fff" stroke-width="2" fill="none"/>',
  creoApp: '<path d="M3 5l4-4h20v23l-5 5H3z" fill="#3e9ac2"/><path d="M3 5l4-4h20l-5 4z" fill="#e8faff"/><path d="M3 5h19v24H3z" fill="#a6e6fb"/>'
}
</script>

<style>
html, body {
  margin: 0;
  background: #1c1c1c;
}
</style>

<style scoped>
.creo {
  position: relative;
  display: flex;
  flex-direction: column;
  width: 1916px;
  height: 1076px;
  overflow: hidden;
  font-family: "Open Sans", "Noto Sans", sans-serif;
  font-size: 14.5px;
  color: #3d4243;
}

svg {
  display: block;
  flex: none;
}

.caret {
  flex: none;
  width: 0;
  height: 0;
  border: 4.5px solid transparent;
  border-top: 5.5px solid #55595a;
  border-bottom: 0;
}

/* title bar */
.titlebar {
  display: grid;
  grid-template-columns: 105px 330px 1fr 97px;
  align-items: center;
  height: 34px;
  background: #666e6e;
}

.brand {
  display: flex;
  align-items: center;
  gap: 8px;
  padding-left: 14px;
  height: 34px;
  border-right: 1px solid #858c8c;
}

.brand-name {
  font-family: Lato, sans-serif;
  font-size: 22.5px;
  font-weight: 700;
  line-height: 1;
  color: #e6eaea;
}

.brand-name sup {
  font-size: 8px;
  vertical-align: 8px;
}

.quick-access {
  display: flex;
  padding-left: 8px;
  height: 24px;
}

.window-title {
  padding-left: 397px;
  font-size: 16.5px;
  color: #f0f3f3;
}

.window-controls {
  display: flex;
  gap: 20px;
  padding-left: 10px;
}

/* tab bar */
.tabbar {
  display: flex;
  height: 35px;
  background: #3c4444;
}

.tab {
  flex: none;
  text-align: center;
  line-height: 36px;
  font-size: 16.1px;
  color: #f0f3f3;
}

.file-tab {
  width: 75px;
  background: linear-gradient(150deg, #62d33f, #4caa30);
}

.active-tab {
  width: 107px;
  margin-left: 11px;
  background: #ecf0f1;
  color: #3b4041;
  font-size: 16.8px;
  font-style: italic;
}

.tab-tools {
  display: flex;
  align-items: center;
  margin-left: 551px;
  height: 32px;
  color: #fff;
  font-size: 17px;
}

.tab-tools svg:nth-child(1) { margin-bottom: 7px; }
.tab-tools svg:nth-child(2) { margin-left: 10px; }
.tab-tools svg:nth-child(3) { margin-left: 15px; }
.tab-tools svg:nth-child(4) { margin-left: 10px; }
.tab-tools b { margin-left: 14px; }

/* ribbon */
.ribbon {
  display: grid;
  grid-template-columns: 61px 682px 242px 138px 734px 59px;
  height: 135px;
  background: #ecf0f1;
  border-bottom: 1px solid #7c8284;
  box-sizing: content-box;
}

.ribbon > div {
  position: relative;
  box-sizing: border-box;
}

.feature-cell,
.ribbon-main,
.preview-cell,
.confirm-cell {
  background: linear-gradient(#a3a9aa, #a3a9aa) right 3px / 1px 130px no-repeat;
}

.feature-cell {
  padding: 48px 0 0 10px;
}

.ribbon-main {
  display: flex;
  flex-direction: column;
  justify-content: space-between;
}

.groups {
  display: flex;
}

.group {
  display: flex;
  flex-direction: column;
  align-items: flex-start;
  padding-left: 6px;
}

.extrude-as { width: 119px; }
.depth { width: 223px; }

.group h4 {
  margin: 5px 0 4px;
  font-size: 14px;
  line-height: 20px;
  letter-spacing: -0.2px;
}

.rbtn {
  display: flex;
  align-items: center;
  gap: 7px;
  box-sizing: border-box;
  height: 34px;
  padding: 0 6px;
  border: 1px solid transparent;
  background: none;
  font: inherit;
  color: inherit;
  white-space: nowrap;
}

.pressed {
  background: #cbcecf;
  border-color: #7b8082;
}

.solid-btn {
  width: 89px;
  margin-bottom: 4px;
}

.surface-btn { gap: 5px; }

.depth-row {
  display: flex;
  align-items: center;
}

.depth-mode {
  display: flex;
  align-items: center;
  box-sizing: border-box;
  width: 52px;
  height: 34px;
  padding-left: 4px;
  background: #cbcecf;
  border: 1px solid #7b8082;
}

.arrow-cell {
  display: flex;
  align-items: center;
  justify-content: center;
  box-sizing: border-box;
  flex: none;
  width: 19px;
  height: 100%;
  border-left: 1px solid #a0a5a6;
}

.depth-mode .arrow-cell {
  width: 18px;
  margin-left: 2px;
}

.combo {
  display: flex;
  flex: none;
  align-items: center;
  justify-content: space-between;
  box-sizing: border-box;
  height: 28px;
  border: 1px solid #a0a5a6;
  background: #fff;
}

.combo > span:first-child {
  padding-left: 3px;
}

.ribbon-combo {
  width: 105px;
  margin-left: 3px;
}

.flip {
  margin-left: 7px;
}

.settings .remove-btn {
  width: 153px;
  padding-left: 5px;
  gap: 4px;
  background: #cdedfb;
  border-color: #5b8ba3;
}

.setting-icons {
  display: flex;
  align-items: center;
  gap: 17px;
  margin: 10px 0 0 8px;
}

.panel-tabs {
  display: flex;
  margin-left: 77px;
}

.ptab {
  box-sizing: border-box;
  height: 29px;
  line-height: 29px;
  text-align: center;
  border: 1px solid #9ba1a2;
  border-right: 0;
  border-bottom: 0;
}

.placement { width: 127px; font-size: 14.2px; }
.options-tab { width: 110px; background: #fff; }
.body-tab { width: 148px; }
.props-tab { width: 125px; border-right: 1px solid #9ba1a2; }

.preview-cell {
  display: flex;
  align-items: center;
  padding-left: 27px;
}

.pause { margin-right: 21px; }
.wire { margin: 0 5px 0 13px; }

.feature-toggle {
  display: flex;
  align-items: center;
  justify-content: center;
  box-sizing: border-box;
  width: 35px;
  height: 35px;
  margin-right: 9px;
  background: #cbcecf;
  border: 1px solid #7b8082;
}

.confirm-cell {
  display: flex;
  padding: 32px 0 0 17px;
}

.ok,
.cancel {
  display: flex;
  flex-direction: column;
  align-items: center;
  justify-content: space-between;
  box-sizing: border-box;
  width: 50px;
  height: 72px;
  padding: 11px 0 5px;
  line-height: 18px;
}

.ok {
  background: #a2e0fb;
  border: 1px solid #86c8e6;
  padding: 10px 0 4px;
}

.cancel {
  width: 54px;
  padding-top: 16px;
  font-size: 14px;
}

.help-cell {
  padding: 12px 0 0 383px;
}

.help-box {
  box-sizing: border-box;
  width: 336px;
  height: 111px;
  padding: 13px 8px;
  background: #dfe2e2;
}

.help-box p {
  margin: 0 0 8px;
  line-height: 20px;
  font-size: 14.1px;
}

.help-box a {
  color: #1e6490;
  text-decoration: underline;
  font-size: 14.1px;
  line-height: 20px;
}

.datum-cell {
  display: flex;
  flex-direction: column;
  align-items: center;
  padding-top: 8px;
  background: #e0e2e2;
  border-left: 1px solid #b2b7b8;
}

.datum-cell span { margin: 13px 0 26px; font-size: 14px; }

/* workspace */
.workspace {
  display: flex;
  height: 773px;
}

.sidebar {
  box-sizing: border-box;
  width: 306px;
  background: #ecf0f2;
  border-right: 3px solid #8f9799;
}

.side-tabs {
  display: flex;
  height: 37px;
  background: #8f9799;
}

.side-tab {
  display: flex;
  align-items: center;
  color: #fff;
}

.side-tab.current {
  box-sizing: border-box;
  width: 124px;
  padding-left: 11px;
  gap: 6px;
  background: #ecf0f2;
  color: #3d4243;
  font-size: 14.2px;
}

.folder-tab {
  width: 90px;
  padding-left: 9px;
  gap: 5px;
}

.fade-text {
  width: 40px;
  mask-image: linear-gradient(90deg, #000 55%, transparent);
}

.fav-tab { gap: 7px; }

.tree-head {
  display: flex;
  align-items: center;
  height: 35px;
  padding-left: 35px;
}

.tree-head strong {
  width: 122px;
  letter-spacing: -0.3px;
}

.tree-head .caret { margin-left: 10px; }
.tree-head .list-icon { margin-left: 11px; }
.tree-head .caret:last-child { margin-left: 11px; }

.filter-row {
  display: flex;
  align-items: center;
  padding-left: 14px;
  gap: 3px;
}

.filter-input {
  display: flex;
  align-items: center;
  justify-content: flex-end;
  box-sizing: border-box;
  width: 207px;
  height: 34px;
  margin-right: 3px;
  padding-right: 6px;
  background: #fff;
  border: 1px solid #6f7576;
}

.tree {
  padding-top: 6px;
  font-size: 12.8px;
  letter-spacing: -0.2px;
}

.node {
  display: flex;
  align-items: center;
  height: 24.06px;
}

.twisty {
  display: flex;
  justify-content: flex-end;
  width: 29px;
  margin-right: 8px;
}

.level-0 .twisty { width: 5px; }
.level-0 .node-label { margin-left: 3px; }
.level-2 .twisty { width: 54px; }

.tri-right {
  border: 5.5px solid transparent;
  border-left: 9px solid #85898a;
  border-right: 0;
}

.tri-down {
  border: 6px solid transparent;
  border-top: 9px solid #85898a;
  border-bottom: 0;
}

.node-icon { width: 21px; }

.node-label {
  padding: 0 2px;
  margin-left: 4px;
  line-height: 23px;
}

.spark {
  margin: 0 -5px 5px 5px;
}

.dim .node-label { color: #b9bdbe; }
.dim .node-icon { opacity: 0.7; }

.selected { background: #a8e1fa; }

.insert-line {
  width: 287px;
  height: 3px;
  margin: 6px 0 9px 10px;
  border-radius: 2px;
  background: #6db558;
}

.viewport {
  position: relative;
  flex: 1;
  background: #2f3534;
}

.cad-text {
  font-family: "Liberation Sans", sans-serif;
  font-size: 14px;
}

.csys { fill: #7b5a62; }

.dim-text {
  font-family: "Liberation Sans", sans-serif;
  font-size: 15px;
  fill: #f4f4dc;
}

.mark {
  font-family: "Liberation Serif", serif;
  font-size: 73px;
  fill: rgba(232, 236, 234, 0.82);
}

.cjk {
  font-family: "Noto Sans CJK SC", sans-serif;
  font-weight: 300;
  font-size: 68px;
}

.view-toolbar {
  position: absolute;
  left: 562px;
  top: 7px;
  display: flex;
  align-items: center;
  box-sizing: border-box;
  width: 490px;
  height: 37px;
  padding-left: 2px;
  background: #eef1f3;
  border: 1px solid #c5c9ca;
}

.view-tool {
  display: flex;
  align-items: center;
  justify-content: center;
  box-sizing: border-box;
  width: 29px;
  height: 29px;
  margin: 0 1.65px;
}

.view-tool.on {
  background: #c9cccd;
  border: 1px solid #6f7576;
}

/* options dialog */
.options-dialog {
  position: absolute;
  left: 257px;
  top: 187px;
  box-sizing: border-box;
  width: 388px;
  height: 314px;
  background: rgba(255, 255, 255, 0.985);
  border: 1px solid #b8bcbd;
}

.dialog-head {
  display: flex;
  align-items: center;
  height: 35px;
  background: #e5e6e6;
  color: #9b9e9f;
}

.dialog-head span {
  width: 387px;
  padding-top: 2px;
  text-align: center;
}

.dialog-head .pin { margin: 0 11px 0 -51px; }

.dialog-body { padding-left: 22px; }

.line {
  display: flex;
  align-items: center;
}

.line label {
  width: 49px;
  padding-left: 16px;
}

.depth-line { padding-top: 20px; line-height: 20px; }
.side-1 { margin-top: 7px; }
.side-1 label { padding-top: 1px; }
.side-2 { margin-top: 13px; }
.side-2 label { padding-bottom: 3px; }

.combo.wide {
  width: 153px;
  margin-right: 4px;
  background: #f6f6f6;
}

.combo.wide .opt {
  display: flex;
  align-items: center;
  gap: 3px;
  padding: 4px 0 0 8px;
}

.combo.wide .none { padding-left: 37px; }
.combo.value { width: 121px; }

.check-line {
  gap: 8px;
  margin: 13px 0 0 2px;
  line-height: 22px;
}

.box {
  display: flex;
  box-sizing: border-box;
  width: 15px;
  height: 15px;
  border: 1px solid #4b5051;
  background: #fff;
}

.disabled { color: #b3b6b7; }
.disabled .box { border-color: #d2d5d6; }
.taper { margin-top: 26px; }
.taper-value { margin: 7px 0 0 25px; }

/* status bar */
.statusbar {
  display: flex;
  align-items: center;
  box-sizing: border-box;
  height: 42px;
  padding-left: 7px;
  padding-top: 3px;
  background: #ecf0f2;
  border-top: 1px solid #6d7273;
}

.status-toggle {
  display: flex;
  align-items: center;
  justify-content: center;
  box-sizing: border-box;
  width: 26px;
  height: 26px;
  background: #cbcecf;
  border: 1px solid #6f7576;
}

.globe { margin: 0 9px 0 6px; }

.window-swatch {
  box-sizing: border-box;
  width: 20px;
  height: 20px;
  border: 1.5px solid #3f7e9c;
  background: linear-gradient(150deg, #fff, #c2e0ea);
}

.message {
  display: flex;
  flex: none;
  box-sizing: border-box;
  width: 1398px;
  height: 26px;
  margin-left: 13px;
  padding-left: 2px;
  border-left: 1px solid #9da3a4;
  font-size: 13px;
  letter-spacing: -0.19px;
  line-height: 18px;
}

.message span { margin-left: 1px; }

.find-box {
  display: flex;
  flex: none;
  align-items: center;
  box-sizing: border-box;
  width: 62px;
  height: 31px;
  padding: 0 2px 0 12px;
  border-left: 1px solid #8d9394;
  border-right: 1px solid #8d9394;
  background: linear-gradient(#8d9394, #8d9394) 5px 0 / 1px 100% no-repeat, linear-gradient(#fbfbfb, #fbfbfb) 8px 0 / 49px 100% no-repeat;
}

.find-box .arrow-cell { margin-left: 4px; }

.selected-count {
  width: 115px;
  margin-left: 4px;
  font-size: 14.2px;
}

.filter-combo {
  width: 217px;
  background: #f6f8f9;
}

.filter-combo > span:first-child { padding-left: 8px; }

/* taskbar */
.taskbar {
  display: flex;
  align-items: center;
  height: 56px;
  padding-left: 26px;
  background: #1c1c1c;
  color: #f0f0f0;
}

.start { margin-top: 4px; }

.search {
  display: flex;
  align-items: center;
  box-sizing: border-box;
  width: 275px;
  height: 40px;
  margin: 4px 0 0 17px;
  padding-left: 13px;
  gap: 11px;
  border: 1px solid #4a4a4a;
  border-radius: 20px;
  background: #3a3a3a;
  font-size: 16px;
  overflow: hidden;
}

.portrait { margin-left: 98px; }

.apps {
  display: flex;
  margin-left: 3px;
}

.app {
  position: relative;
  display: flex;
  align-items: center;
  justify-content: center;
  box-sizing: border-box;
  width: 54.9px;
  height: 56px;
  padding-top: 4px;
}

.app.creoApp {
  border-radius: 5px;
  background: #242424;
}

.explorer::after,
.creoApp::after {
  content: "";
  position: absolute;
  left: 23px;
  bottom: 2px;
  width: 8px;
  height: 4px;
  border-radius: 2px;
  background: #9a9a9a;
}

.creoApp::after {
  left: 17px;
  width: 20px;
  background: #c9a0dc;
}

.tray {
  display: flex;
  align-items: center;
  margin-left: auto;
  padding-right: 22px;
  padding-top: 4px;
  font-size: 15px;
  line-height: 19.5px;
}

.lang { width: 30px; margin: 0 22px 0 20px; text-align: center; }
.sync { margin-left: 20px; }
.vol { margin: 0 8px; }
.clock { width: 64px; margin: 0 10px 0 18px; display: flex; justify-content: flex-end; text-align: right; white-space: nowrap; font-size: 14.8px; }
</style>
